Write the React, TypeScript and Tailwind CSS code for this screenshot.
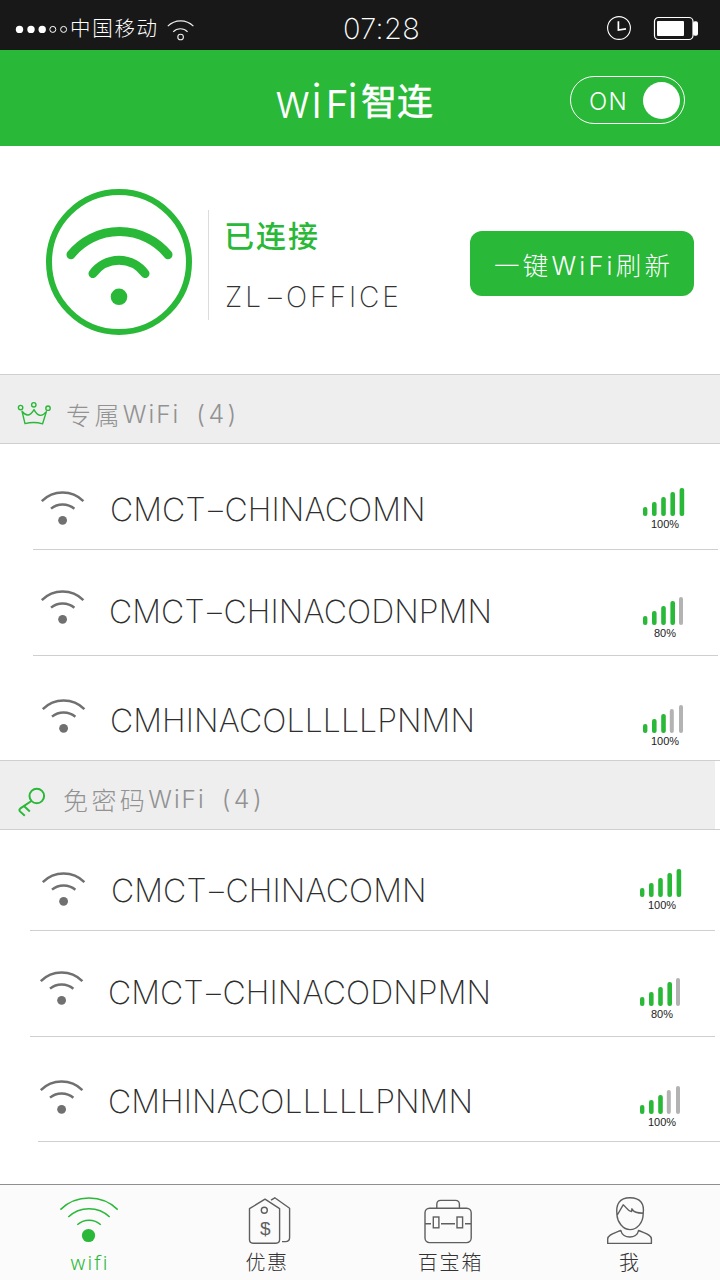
import React from "react";

const SANS = "font-['Inter','Noto_Sans_CJK_SC',sans-serif]";
const CJK = "font-['Noto_Sans_CJK_SC','Inter',sans-serif]";

function Dash({ className }: { className: string }) {
  return <span className={`inline-block origin-center text-center tracking-normal ${className}`}>-</span>;
}

function StatusBar() {
  return (
    <div className="flex h-[50px] items-start bg-[#181818] text-white">
      <svg className="ml-[15px] mt-[24px] h-[12px] w-[54px]" viewBox="0 0 54 12">
        <circle cx="4.5" cy="5.4" r="3.7" fill="#fff" />
        <circle cx="16" cy="5.4" r="3.7" fill="#fff" />
        <circle cx="27.2" cy="5.4" r="3.7" fill="#fff" />
        <circle cx="37.8" cy="5.4" r="3" fill="none" stroke="#fff" />
        <circle cx="48.6" cy="5.4" r="3" fill="none" stroke="#fff" />
      </svg>
      <span className={`${CJK} ml-px mt-[12px] w-[92px] whitespace-nowrap text-[20.5px] font-light leading-[30px] tracking-[1.7px]`}>
        中国移动
      </span>
      <svg className="ml-[4px] mt-[18px] h-[24px] w-[30px]" viewBox="0 0 30 24" fill="none" stroke="#eee" strokeWidth="1.1">
        <path d="M1.8 8.2A18 18 0 0 1 27.4 8.2M7.2 13.8A10 10 0 0 1 21.6 13.8" />
        <circle cx="14.6" cy="19" r="2.8" />
      </svg>
      <span className={`${SANS} ml-[147px] mt-[13px] w-[89px] whitespace-nowrap text-[29px] font-extralight leading-[32px] tracking-[0.3px]`}>
        07:28
      </span>
      <svg className="ml-auto mr-[21px] mt-[15px] h-[26px] w-[93px]" viewBox="0 0 93 26" fill="none" stroke="#fff">
        <circle cx="13" cy="13" r="11.4" strokeWidth="1.1" />
        <path d="M12.4 6.2V15L20 13.8" strokeWidth="1.7" />
        <rect x="48.5" y="2.5" width="38.5" height="22" rx="4" strokeWidth="1.2" />
        <rect x="51" y="6" width="27" height="15" rx="1" fill="#fff" stroke="none" />
        <rect x="87" y="6.3" width="5" height="14.4" rx="2" fill="#fff" stroke="none" />
      </svg>
    </div>
  );
}

function Header() {
  return (
    <header className="flex h-[96px] items-start bg-[#29b837] text-white">
      <h1 className="ml-[275px] mt-[21px] flex h-[60px] w-[170px] items-baseline whitespace-nowrap leading-[60px]">
        <span className="flex w-[86px] items-baseline font-['Inter',sans-serif]">
          <span className="w-[36px] origin-left scale-x-[0.9] text-[48px] font-[350]">w</span>
          <span className="w-[15px] text-[48px] font-[350]">i</span>
          <span className="w-[21px] text-[38px] font-normal">F</span>
          <span className="text-[48px] font-[350]">i</span>
        </span>
        <span className={`${CJK} -translate-y-[3px] text-[36px] font-normal [-webkit-text-stroke:0.5px_#fff]`}>智连</span>
      </h1>
      <div className="ml-auto mr-[35px] mt-[26px] flex h-[48px] w-[115px] items-center rounded-full border border-white pl-[18px]">
        <span className="w-[54px] pt-[3px] font-['Inter',sans-serif] text-[24px] font-light leading-[46px] tracking-[1.2px]">ON</span>
        <span className="size-[37px] rounded-full bg-white" />
      </div>
    </header>
  );
}

function Connected() {
  return (
    <section className="flex h-[228px] items-start bg-white">
      <svg className="ml-[46px] mt-[43px] size-[146px]" viewBox="46 189 146 146" fill="none" stroke="#29b837">
        <circle cx="119" cy="262" r="70" strokeWidth="6" />
        <path d="M71 254.7A62.4 62.4 0 0 1 168 254.7M93 273.5A32 32 0 0 1 145 273.5" strokeWidth="9" strokeLinecap="round" />
        <circle cx="119" cy="296.8" r="8.3" fill="#29b837" stroke="none" />
      </svg>
      <div className="ml-[16px] mt-[64px] h-[110px] w-px bg-[#dcdcdc]" />
      <div className="ml-[15px] mt-[68px] w-[200px] whitespace-nowrap">
        <p className={`${CJK} text-[30px] font-medium leading-[40px] tracking-[2px] text-[#29b837]`}>已连接</p>
        <p className="ml-px mt-[23px] font-['Inter',sans-serif] text-[28px] font-[250] leading-[40px] tracking-[3px] text-[#333]">
          ZL<Dash className="w-[22px] scale-x-[1.7]" />OFFICE
        </p>
      </div>
      <button className="ml-auto mr-[26px] mt-[85px] flex h-[65px] w-[224px] items-center whitespace-nowrap rounded-[12px] bg-[#29b837] pl-[24px] pt-[5px] text-white">
        <span className={`${SANS} text-[25.5px] font-light leading-[40px] tracking-[3.2px]`}>一键WiFi刷新</span>
      </button>
    </section>
  );
}

function Crown() {
  return (
    <svg className="h-[26px] w-[34px]" viewBox="17 400 34 26" fill="none" stroke="#29b837" strokeWidth="1.4" strokeLinejoin="round">
      <circle cx="20.6" cy="407.6" r="2.2" />
      <circle cx="33.8" cy="404.8" r="2.2" />
      <circle cx="48" cy="408.2" r="2.2" />
      <path d="M22 411.2L25 423.6Q34 421.2 42.6 423.8L46.4 411.6Q39.5 420 34 409.6Q28.5 419.5 22 411.2Z" />
    </svg>
  );
}

function Key() {
  return (
    <svg className="h-[30px] w-[28px]" viewBox="18 787 28 30" fill="none" stroke="#29b837" strokeWidth="2">
      <circle cx="36.8" cy="796" r="7.3" />
      <path d="M31.4 801L20.4 808.4Q18.6 810 20 811.4L24.8 815.8M24 806L29.8 811.4" />
    </svg>
  );
}

function SectionTitle({ icon, cjk, narrow, iconBox, textBox }: { icon: React.ReactNode; cjk: string; narrow?: boolean; iconBox: string; textBox: string }) {
  return (
    <div className={`flex h-[70px] items-start border-y border-[#cfcfcf] ${narrow ? "bg-[linear-gradient(to_right,#eee_715px,#fff_715px)]" : "bg-[#eee]"}`}>
      <div className={iconBox}>{icon}</div>
      <h2 className={`${textBox} flex items-start whitespace-nowrap text-[#929292]`}>
        <span className={`${CJK} text-[25px] font-light leading-[38px] tracking-[3.4px]`}>{cjk}</span>
        <span className="font-['Inter',sans-serif] text-[24.5px] font-[350] leading-[38px] tracking-[2px]">WiFi</span>
        <span className="ml-[16px] font-['Inter',sans-serif] text-[25px] font-[350] leading-[38px] tracking-[3.4px]">(4)</span>
      </h2>
    </div>
  );
}

function WifiIcon() {
  return (
    <svg className="h-[36px] w-[46px]" viewBox="0 0 46 36" fill="none" stroke="#707070" strokeWidth="2.5">
      <path d="M1.8 11.2A29.5 29.5 0 0 1 43.4 11.2M11 18.6A18.5 18.5 0 0 1 34.4 18.8" />
      <circle cx="22.6" cy="30.3" r="4.4" fill="#707070" stroke="none" />
    </svg>
  );
}

const BARS = [
  { x: 0, y: 19, w: 4.4, h: 9 },
  { x: 9, y: 14, w: 4.6, h: 14 },
  { x: 18.2, y: 9, w: 4.6, h: 19 },
  { x: 27.4, y: 4, w: 4.6, h: 24 },
  { x: 36.6, y: 0, w: 4.6, h: 28 },
];

function Signal({ level, label }: { level: number; label: string }) {
  return (
    <div className="w-[45px]">
      <svg className="h-[29px] w-[43px]" viewBox="0 0 43 29">
        {BARS.map((b, i) => {
          const off = i >= level;
          return <rect key={i} x={off ? b.x - 0.6 : b.x} y={b.y} width={off ? 4 : b.w} height={b.h} rx="2.1" fill={off ? "#b3b3b3" : "#29b837"} />;
        })}
      </svg>
      <p className="w-[44px] text-center font-['Liberation_Sans',sans-serif] text-[11px] leading-[14px] text-[#222]">{label}</p>
    </div>
  );
}

type Row = {
  name: string;
  level: number;
  label: string;
  box: string;
  icon: string;
  text: string;
  signal: string;
  line: string;
};

function NetworkRow({ row }: { row: Row }) {
  const parts = row.name.split("-");
  return (
    <li className={`flex flex-col ${row.box}`}>
      <div className="flex flex-1 items-start">
        <div className={`w-[46px] ${row.icon}`}>
          <WifiIcon />
        </div>
        <span className={`flex-1 whitespace-nowrap font-['Inter',sans-serif] text-[32px] font-[250] leading-[40px] tracking-[0.1px] text-[#2e2e2e] ${row.text}`}>
          {parts[0]}
          {parts.length > 1 && <Dash className="w-[19px] scale-x-[1.6]" />}
          {parts[1]}
        </span>
        <div className={row.signal}>
          <Signal level={row.level} label={row.label} />
        </div>
      </div>
      {row.line && <div className={`h-px bg-[#cfcfcf] ${row.line}`} />}
    </li>
  );
}

const PRIVATE: Row[] = [
  { name: "CMCT-CHINACOMN", level: 5, label: "100%", box: "h-[106px]", icon: "ml-[40px] mt-[46px]", text: "ml-[24px] mt-[46px]", signal: "mr-[32px] mt-[44px]", line: "ml-[33px] mr-[2px]" },
  { name: "CMCT-CHINACODNPMN", level: 4, label: "80%", box: "h-[106px]", icon: "ml-[40px] mt-[39px]", text: "ml-[23px] mt-[42px]", signal: "mr-[32px] mt-[47px]", line: "ml-[33px] mr-[2px]" },
  { name: "CMHINACOLLLLLPNMN", level: 3, label: "100%", box: "h-[104px]", icon: "ml-[41px] mt-[42px]", text: "ml-[23px] mt-[45px]", signal: "mr-[32px] mt-[49px]", line: "" },
];

const OPEN: Row[] = [
  { name: "CMCT-CHINACOMN", level: 5, label: "100%", box: "h-[101px]", icon: "ml-[41px] mt-[41px]", text: "ml-[24px] mt-[41px]", signal: "mr-[35px] mt-[39px]", line: "ml-[30px] mr-[5px]" },
  { name: "CMCT-CHINACODNPMN", level: 4, label: "80%", box: "h-[106px]", icon: "ml-[39px] mt-[39px]", text: "ml-[23px] mt-[42px]", signal: "mr-[35px] mt-[47px]", line: "ml-[30px] mr-[5px]" },
  { name: "CMHINACOLLLLLPNMN", level: 3, label: "100%", box: "h-[105px]", icon: "ml-[39px] mt-[42px]", text: "ml-[23px] mt-[45px]", signal: "mr-[35px] mt-[49px]", line: "ml-[38px]" },
];

function TabWifi() {
  return (
    <svg className="h-[50px] w-[60px]" viewBox="59 1195 60 50" fill="none" stroke="#29b837" strokeWidth="1.5">
      <path d="M60.4 1209.6A41.5 41.5 0 0 1 117.7 1209.6M68.3 1217A30 30 0 0 1 109.7 1217M77.3 1224.8A17.5 17.5 0 0 1 100.8 1224.8" />
      <circle cx="88.5" cy="1235.5" r="6.6" fill="#29b837" stroke="none" />
    </svg>
  );
}

function TabTag() {
  return (
    <svg className="h-[50px] w-[44px]" viewBox="247 1195 44 50" fill="none" stroke="#5f5f5f" strokeWidth="1.4" strokeLinejoin="round">
      <path d="M249.5 1208.7L265 1199.2L279.6 1208.7V1239.5Q279.6 1243.2 276 1243.2H253Q249.5 1243.2 249.5 1239.5ZM271 1200.2L274.8 1197.8L289.6 1208.2V1237.5Q289.6 1241.6 285.5 1241.6H282" />
      <circle cx="264.3" cy="1210.2" r="3" />
      <text x="265.2" y="1234.6" textAnchor="middle" fontFamily="Liberation Sans" fontSize="19" fill="#5f5f5f" stroke="none">$</text>
    </svg>
  );
}

function TabCase() {
  return (
    <svg className="h-[50px] w-[50px]" viewBox="423 1195 50 50" fill="none" stroke="#5f5f5f" strokeWidth="1.4">
      <rect x="425" y="1208.2" width="46.2" height="34.4" rx="4.5" />
      <path d="M436.8 1208V1204.4Q436.8 1200.4 440.8 1200.4H455.4Q459.4 1200.4 459.4 1204.4V1208M425 1223.7H431M441 1223.7H455M465 1223.7H471" />
      <rect x="433.3" y="1217" width="5.6" height="10.8" />
      <rect x="457" y="1217" width="5.6" height="10.8" />
    </svg>
  );
}

function TabUser() {
  return (
    <svg className="h-[50px] w-[48px]" viewBox="606 1195 48 50" fill="none" stroke="#5f5f5f" strokeWidth="1.4" strokeLinejoin="round">
      <path d="M617 1215.5C615.5 1204 619.5 1197.7 630 1197.7C640.5 1197.7 644.5 1204 643.2 1213.5C643.2 1223 637 1229.6 630 1229.6C623 1229.6 617.5 1222 617 1215.5L623.2 1204.8C625.5 1206 627.5 1211 631.6 1211.6L631.9 1208.8C634 1212.4 637 1213 643.2 1213.2" />
      <path d="M620.8 1230.4C615 1233.2 607.7 1234.2 607.7 1239V1243.4H651.4V1239C651.4 1234.2 644.2 1233.2 638.6 1230.4C637 1239.2 622.6 1239.2 620.8 1230.4Z" />
    </svg>
  );
}

function TabBar() {
  return (
    <nav className="flex h-[96px] items-start border-t border-[#8f8f8f] bg-[#fbfbfb] text-[#333]">
      <div className="ml-[59px] mt-[10px] flex w-[60px] flex-col items-center">
        <TabWifi />
        <span className="ml-[2px] mt-[4px] font-['Noto_Sans',sans-serif] text-[20px] font-light leading-[28px] tracking-[2.2px] text-[#29b837]">wifi</span>
      </div>
      <div className="ml-[117px] mt-[10px] flex w-[66px] flex-col items-center">
        <TabTag />
        <span className={`${CJK} mr-[4px] mt-[3px] text-[20px] font-light leading-[28px] tracking-[1.6px]`}>优惠</span>
      </div>
      <div className="ml-[106px] mt-[10px] flex w-[80px] flex-col items-center whitespace-nowrap">
        <TabCase />
        <span className={`${CJK} ml-[5px] mt-[3px] text-[20px] font-light leading-[28px] tracking-[1.8px]`}>百宝箱</span>
      </div>
      <div className="ml-[118px] mt-[10px] flex w-[48px] flex-col items-center">
        <TabUser />
        <span className={`${CJK} mr-[2px] mt-[3px] text-[20px] font-light leading-[28px]`}>我</span>
      </div>
    </nav>
  );
}

export default function App() {
  return (
    <div className="flex h-[1280px] w-[720px] flex-col overflow-hidden bg-white">
      <StatusBar />
      <Header />
      <Connected />
      <SectionTitle icon={<Crown />} cjk="专属" iconBox="ml-[17px] mt-[25px] w-[34px]" textBox="ml-[15px] mt-[20px]" />
      <ul>
        {PRIVATE.map((row, i) => (
          <NetworkRow key={i} row={row} />
        ))}
      </ul>
      <SectionTitle icon={<Key />} cjk="免密码" narrow iconBox="ml-[18px] mt-[26px] w-[28px]" textBox="ml-[17px] mt-[19px]" />
      <ul className="flex-1">
        {OPEN.map((row, i) => (
          <NetworkRow key={i} row={row} />
        ))}
      </ul>
      <TabBar />
    </div>
  );
}
